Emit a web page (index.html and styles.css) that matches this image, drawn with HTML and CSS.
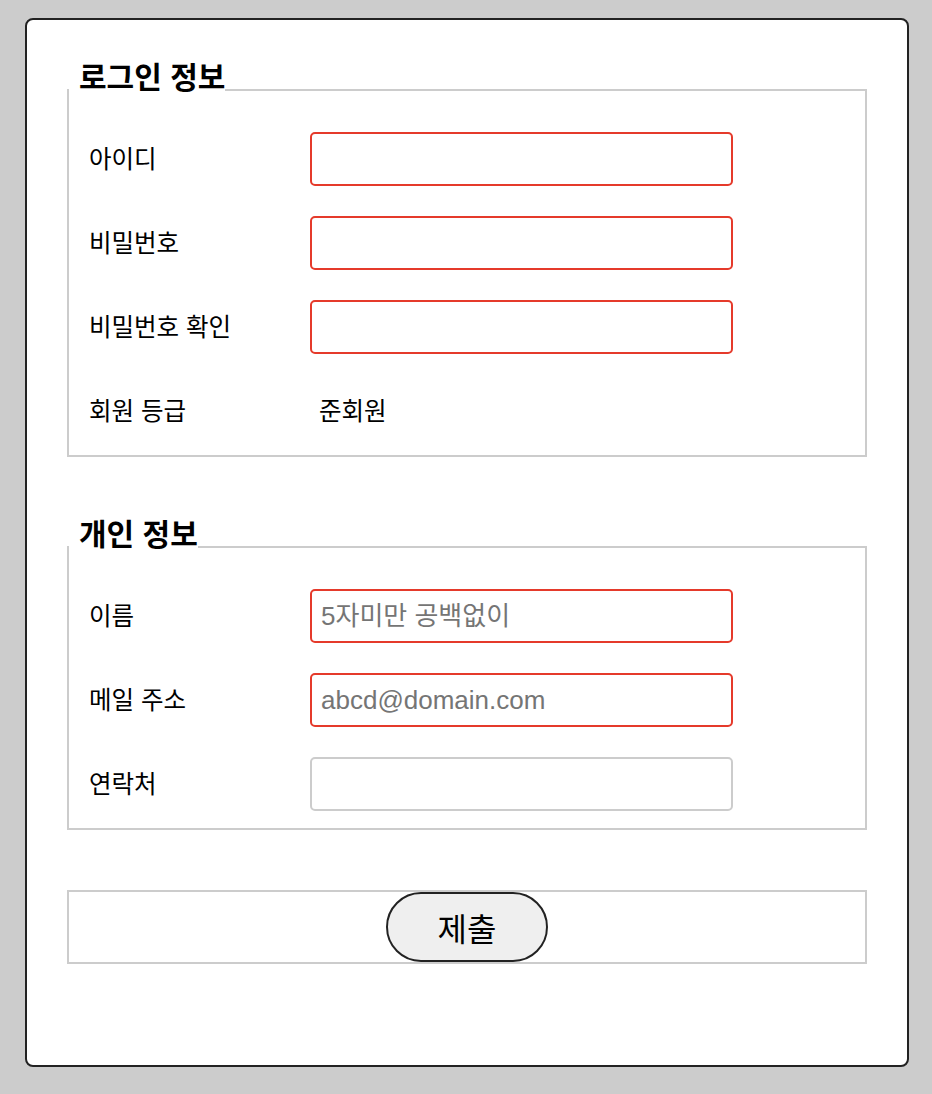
FILE: index.html
```html
<!DOCTYPE html>
<html lang="ko">
  <head>
    <meta charset="UTF-8" />
    <title>회원 가입</title>
    <link rel="stylesheet" href="styles.css">
  </head>
  <body>
    <div class="card">
      <form class="signup">
        <fieldset class="group">
          <legend>로그인 정보</legend>
          <div class="row">
            <label for="uid">아이디</label>
            <input type="text" id="uid" class="field invalid" />
          </div>
          <div class="row">
            <label for="pw">비밀번호</label>
            <input type="password" id="pw" class="field invalid" />
          </div>
          <div class="row">
            <label for="pw2">비밀번호 확인</label>
            <input type="password" id="pw2" class="field invalid" />
          </div>
          <div class="row">
            <span class="label">회원 등급</span>
            <span class="value">준회원</span>
          </div>
        </fieldset>

        <fieldset class="group">
          <legend>개인 정보</legend>
          <div class="row">
            <label for="name">이름</label>
            <input type="text" id="name" class="field invalid" placeholder="5자미만 공백없이" />
          </div>
          <div class="row">
            <label for="mail">메일 주소</label>
            <input type="email" id="mail" class="field invalid" placeholder="abcd@domain.com" />
          </div>
          <div class="row">
            <label for="tel">연락처</label>
            <input type="tel" id="tel" class="field" />
          </div>
        </fieldset>

        <fieldset class="actions">
          <button type="submit" class="submit">제출</button>
        </fieldset>
      </form>
    </div>
  </body>
</html>
```

FILE: styles.css
```css
body {
  margin: 0;
  padding: 18px 23px 27px 25px;
  background: #cccccc;
  font-family: "Liberation Sans", "Noto Sans CJK KR", sans-serif;
  color: #000;
}

.card {
  background: #fff;
  border: 2px solid #222;
  border-radius: 8px;
  padding: 42px 40px 101px;
}

.group {
  margin: 0;
  min-width: 0;
  border: 2px solid #cccccc;
  padding: 14px 20px 17px;
}

.group + .group {
  margin-top: 62px;
}

.group legend {
  margin-left: -20px;
  padding: 0 0 24px 10px;
  font-size: 30px;
  font-weight: 700;
  line-height: 32px;
}

.row {
  display: grid;
  grid-template-columns: 221px 423px;
  align-items: center;
  height: 54px;
}

.row + .row {
  margin-top: 30px;
}

.row label,
.row .label,
.row .value {
  font-size: 24.5px;
  padding-bottom: 4px;
}

.row .value {
  padding-left: 9px;
}

.field {
  box-sizing: border-box;
  width: 423px;
  height: 54px;
  padding: 0 9px;
  border: 2px solid #cccccc;
  border-radius: 5px;
  font-family: inherit;
  font-size: 26px;
  color: #000;
  background: #fff;
}

.field.invalid {
  border-color: #e53a2b;
}

.field::placeholder {
  color: #757575;
}

.actions {
  margin: 60px 0 0;
  min-width: 0;
  padding: 0;
  border: 2px solid #cccccc;
  display: flex;
  justify-content: center;
}

.submit {
  width: 162px;
  height: 70px;
  border: 2px solid #222;
  border-radius: 35px;
  background: #efefef;
  font-family: inherit;
  font-size: 32px;
  color: #000;
  cursor: pointer;
}
```
